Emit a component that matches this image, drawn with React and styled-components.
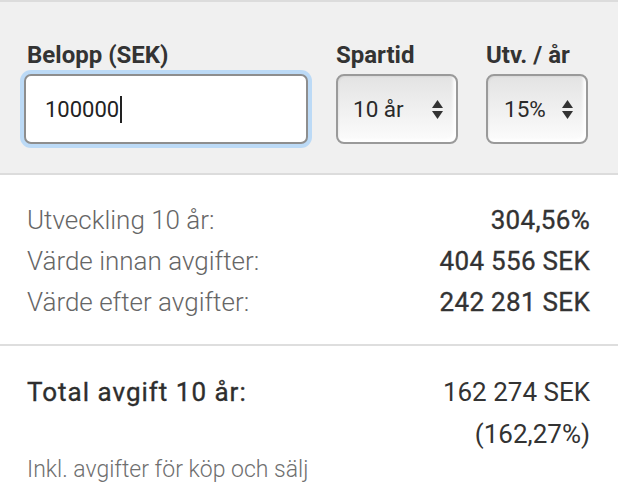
import React from "react";
import styled, { createGlobalStyle } from "styled-components";

const GlobalStyle = createGlobalStyle`
  html, body {
    margin: 0;
    padding: 0;
    background: #ffffff;
  }
  body {
    font-family: Roboto, "Noto Sans", "Liberation Sans", sans-serif;
    color: #333;
    -webkit-font-smoothing: antialiased;
  }
`;

const Page = styled.div`
  width: 618px;
  background: #fff;
`;

const FormPanel = styled.div`
  display: flex;
  align-items: flex-start;
  gap: 28px;
  padding: 40px 29px 29px 24px;
  background: #f0f0f0;
  border-top: 2px solid #dcdcdc;
  border-bottom: 2px solid #dcdcdc;
`;

const Field = styled.div`
  display: flex;
  flex-direction: column;
  width: ${(p) => p.width}px;
`;

const Label = styled.label`
  font-size: 24px;
  line-height: 26px;
  font-weight: 700;
  color: #333;
  padding-left: ${(p) => p.indent || 0}px;
  margin-bottom: 6px;
  white-space: nowrap;
`;

const AmountBox = styled.div`
  display: flex;
  align-items: center;
  height: 70px;
  box-sizing: border-box;
  padding-left: 19px;
  background: #fff;
  border: 2px solid #8e8e8e;
  border-radius: 7px;
  box-shadow: 0 0 0 4px #bcdaf6;
  font-size: 22px;
  color: #222;
`;

const Caret = styled.span`
  display: inline-block;
  width: 2px;
  height: 27px;
  margin-left: 1px;
  background: #222;
`;

const SelectBox = styled.div`
  display: flex;
  align-items: center;
  justify-content: space-between;
  height: 70px;
  box-sizing: border-box;
  padding: 0 13px 0 ${(p) => p.pad}px;
  border: 2px solid #9a9a9a;
  border-radius: 8px;
  background: linear-gradient(#e3e3e3 0%, #f1f1f1 55%, #fcfcfc 100%);
  box-shadow: inset -3px -3px 3px rgba(255, 255, 255, 0.9),
    inset 1px 1px 2px rgba(0, 0, 0, 0.05);
  font-size: 22.5px;
  color: #2a2a2a;
`;

const Arrows = () => (
  <svg width="11" height="19" viewBox="0 0 11 19">
    <path d="M5.5 0 L11 8 L0 8 Z" fill="#333" />
    <path d="M0 11 L11 11 L5.5 19 Z" fill="#333" />
  </svg>
);

const Results = styled.div`
  padding: 25px 28px 21px 27px;
`;

const Row = styled.div`
  display: flex;
  justify-content: space-between;
  align-items: baseline;
  font-size: 26px;
  line-height: ${(p) => p.lh || 41}px;
`;

const Key = styled.span`
  font-weight: ${(p) => (p.strong ? 400 : 300)};
  color: ${(p) => (p.strong ? "#2e2e2e" : "#666")};
  letter-spacing: ${(p) => (p.strong ? "1px" : "0")};
  -webkit-text-stroke: ${(p) => (p.strong ? "0.35px #2e2e2e" : "0")};
`;

const Value = styled.span`
  font-weight: 400;
  color: #333;
  margin-left: auto;
  -webkit-text-stroke: ${(p) => (p.light ? "0" : "0.35px #333")};
  letter-spacing: ${(p) => (p.light ? "0" : "0.3px")};
`;

const Divider = styled.div`
  border-top: 2px solid #dedede;
`;

const Note = styled.div`
  margin-top: 3px;
  font-size: 23px;
  line-height: 24px;
  font-weight: 300;
  color: #6f6f6f;
`;

const TotalBlock = styled.div`
  padding: 25px 28px 20px 27px;
`;

export default function App() {
  return (
    <>
      <GlobalStyle />
      <Page>
        <FormPanel>
          <Field width={284}>
            <Label indent={3}>Belopp (SEK)</Label>
            <AmountBox>
              100000
              <Caret />
            </AmountBox>
          </Field>
          <Field width={122}>
            <Label>Spartid</Label>
            <SelectBox pad={15}>
              <span>10 år</span>
              <Arrows />
            </SelectBox>
          </Field>
          <Field width={102}>
            <Label>Utv. / år</Label>
            <SelectBox pad={16}>
              <span>15%</span>
              <Arrows />
            </SelectBox>
          </Field>
        </FormPanel>

        <Results>
          <Row>
            <Key>Utveckling 10 år:</Key>
            <Value>304,56%</Value>
          </Row>
          <Row>
            <Key>Värde innan avgifter:</Key>
            <Value>404 556 SEK</Value>
          </Row>
          <Row>
            <Key>Värde efter avgifter:</Key>
            <Value>242 281 SEK</Value>
          </Row>
        </Results>

        <Divider />

        <TotalBlock>
          <Row lh={42}>
            <Key strong>Total avgift 10 år:</Key>
            <Value light>162 274 SEK</Value>
          </Row>
          <Row lh={42}>
            <Value light>(162,27%)</Value>
          </Row>
          <Note>Inkl. avgifter för köp och sälj</Note>
        </TotalBlock>
      </Page>
    </>
  );
}
